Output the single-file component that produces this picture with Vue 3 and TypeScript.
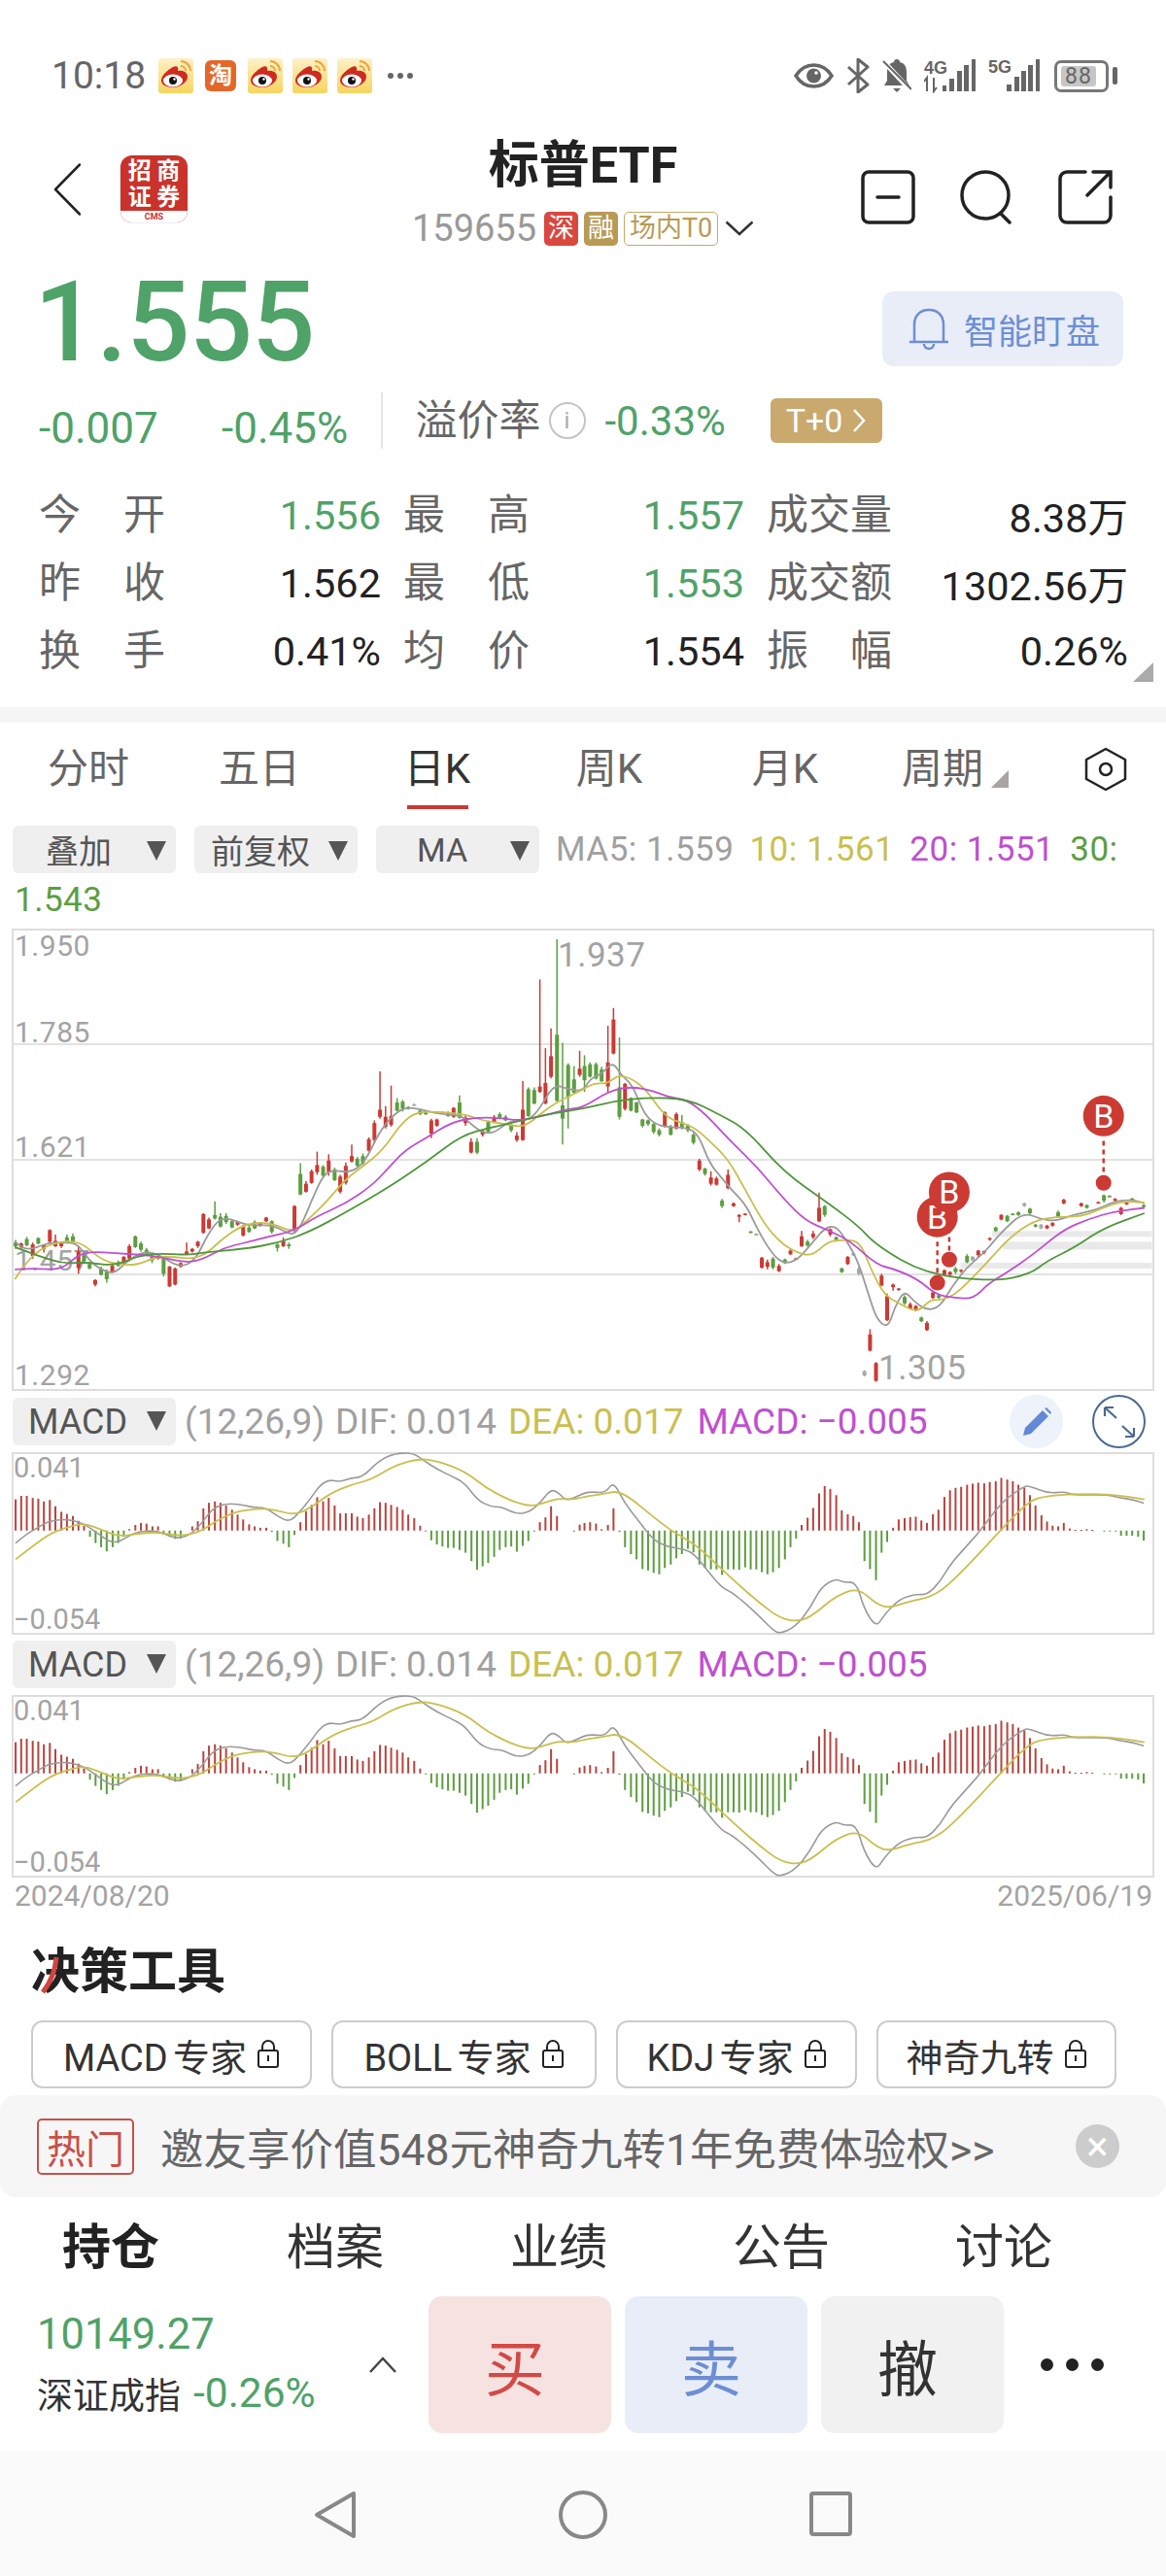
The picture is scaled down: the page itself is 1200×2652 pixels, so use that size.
<script setup lang="ts">
type Candle = [number, number, number, number, number, number];
type Pt = [number, number];

const zx = (x: number) => x / 2.6133;
const zy = (y: number) => 720 + y / 2.1778;
const my = (y: number) => 1400 + y / 2.8;

const shift = <T extends number[]>(rows: T[]): T[] => rows.map((r) => [r[0] + 1568, ...r.slice(1)] as unknown as T);

// x, kind (0 red, 1 green, 2 grey), wick top, body top, body bottom, wick bottom
const leftCandles: Candle[] = [
  [42,1,1212,1218,1226,1232],[57,0,1218,1220,1228,1232],[72,1,1205,1210,1224,1226],[88,0,1218,1222,1248,1254],[103,1,1206,1208,1220,1222],
  [118,0,1222,1224,1232,1240],[134,0,1188,1190,1216,1222],[149,0,1200,1214,1226,1228],[165,0,1216,1218,1226,1230],[180,1,1200,1206,1218,1220],
  [196,1,1198,1204,1216,1218],[211,0,1225,1238,1275,1288],[226,1,1240,1246,1260,1262],[241,1,1262,1266,1276,1278],[256,0,1300,1302,1312,1316],
  [272,1,1272,1276,1290,1292],[287,1,1278,1282,1300,1308],[302,0,1266,1270,1284,1286],[318,1,1258,1262,1270,1272],[333,0,1248,1250,1262,1266],
  [348,0,1222,1226,1254,1260],[364,1,1202,1204,1228,1230],[379,1,1216,1220,1234,1238],[394,1,1230,1234,1244,1246],[409,1,1246,1250,1258,1264],
  [425,0,1246,1248,1254,1256],[440,1,1250,1254,1288,1294],[456,0,1270,1272,1316,1318],[471,0,1274,1276,1312,1314],[486,0,1262,1264,1272,1274],
  [502,0,1218,1238,1244,1246],[517,0,1230,1232,1238,1240],[532,0,1214,1216,1226,1230],[547,0,1152,1154,1196,1198],[562,0,1162,1166,1186,1188],
  [578,1,1126,1156,1164,1166],[593,1,1152,1160,1182,1184],[608,1,1152,1158,1172,1176],[624,1,1166,1170,1184,1186],[639,0,1170,1172,1178,1180],
  [654,0,1178,1182,1202,1204],[670,1,1176,1184,1194,1196],[685,1,1168,1172,1186,1188],[700,0,1172,1174,1180,1182],[716,0,1160,1162,1170,1172],
  [731,1,1168,1170,1194,1198],[746,1,1220,1222,1230,1238],[762,0,1206,1214,1226,1228],[777,1,1218,1222,1226,1232],[792,0,1134,1136,1190,1198],
  [808,1,1040,1064,1110,1112],[823,0,1080,1086,1104,1106],[838,0,1054,1058,1084,1086],[853,0,1014,1044,1060,1066],[869,1,1044,1048,1068,1070],
  [884,0,1020,1034,1060,1068],[900,1,1050,1054,1078,1080],[915,0,1066,1070,1104,1108],[930,0,1038,1046,1084,1088],[946,0,998,1024,1036,1038],
  [961,1,1026,1030,1046,1048],[976,1,1018,1024,1040,1044],[992,0,982,986,1012,1014],[1007,0,944,950,988,996],[1022,0,834,920,936,940],
  [1037,0,912,936,958,962],[1052,0,866,934,954,958],[1068,1,894,904,922,924],[1083,1,898,902,918,924],[1098,1,912,914,918,920],
  [1114,2,906,908,910,912],[1130,1,920,922,930,932],[1145,1,926,926,930,932],[1160,0,940,944,974,984],[1175,0,940,942,956,958],
  [1190,2,924,925,928,930],[1205,1,924,926,934,936],[1220,0,914,916,936,938],[1236,1,888,904,938,940],[1252,0,932,938,950,956],
  [1267,0,984,992,1016,1018],[1283,1,984,992,1016,1020],[1298,0,966,968,976,980],[1313,1,944,948,970,972],[1329,0,932,936,948,950],
  [1344,1,926,930,938,940],[1360,1,932,936,944,946],[1375,1,952,956,966,970],[1390,0,970,978,988,992],[1406,0,856,920,988,990],
  [1421,1,870,874,934,936],[1437,1,870,876,906,908],[1452,0,628,868,880,882],[1467,0,782,860,906,908],[1482,0,738,800,846,850],
  [1498,1,538,752,900,902],[1513,1,770,910,940,998],[1528,1,816,820,892,962],[1544,1,822,852,882,884],[1559,0,788,828,842,846],
];
const rightCandles: Candle[] = [
  [4,1,798,822,854,880],[19,1,814,818,846,848],[35,1,814,818,850,852],[50,1,824,830,856,858],[67,0,732,814,868,882],[82,0,692,718,794,796],
  [98,1,758,870,936,942],[113,0,860,862,918,922],[129,1,892,894,922,924],[144,1,902,904,926,928],[160,1,940,942,956,960],[175,1,942,944,952,956],
  [190,1,950,952,970,974],[205,1,962,966,976,980],[220,0,924,926,958,960],[236,1,954,960,976,978],[251,0,926,930,962,964],[266,1,932,948,960,964],
  [282,1,952,956,966,970],[297,1,972,976,994,998],[313,0,1030,1034,1054,1058],[328,1,1050,1052,1064,1068],[344,0,1058,1072,1086,1090],[359,0,1070,1074,1088,1090],
  [374,1,1120,1124,1136,1140],[390,0,1054,1066,1096,1098],[405,0,1128,1130,1136,1138],[420,0,1154,1156,1160,1172],[436,0,1152,1153,1156,1157],[451,1,1192,1193,1196,1197],
  [466,2,1197,1198,1202,1203],[481,0,1250,1252,1274,1276],[496,0,1256,1262,1272,1278],[511,1,1250,1254,1274,1278],[527,0,1266,1270,1282,1284],[543,1,1254,1256,1264,1266],
  [558,0,1232,1236,1244,1246],[573,0,1252,1253,1255,1256],[588,0,1192,1204,1226,1228],[604,1,1212,1216,1224,1228],[619,0,1192,1198,1206,1210],[635,0,1106,1140,1170,1172],
  [650,1,1134,1136,1156,1160],[665,0,1186,1188,1200,1204],[681,1,1204,1206,1212,1216],[696,1,1274,1276,1284,1286],[712,0,1248,1250,1266,1268],[727,2,1240,1242,1246,1248],
  [742,2,1272,1276,1288,1292],[757,2,1504,1506,1516,1518],[772,0,1412,1424,1460,1462],[788,0,1486,1488,1528,1530],[803,0,1288,1292,1314,1316],[818,0,1332,1338,1392,1394],
  [834,0,1310,1312,1318,1326],[849,0,1320,1321,1324,1326],[865,1,1336,1340,1354,1358],[880,0,1352,1356,1366,1368],[895,0,1358,1360,1370,1372],[910,1,1384,1386,1394,1396],
  [925,0,1394,1398,1414,1416],[941,0,1326,1330,1342,1344],[957,1,1334,1336,1342,1344],[972,0,1278,1280,1290,1292],[987,0,1282,1284,1290,1296],[1002,1,1272,1276,1284,1288],
  [1017,0,1278,1279,1282,1286],[1033,1,1244,1248,1262,1264],[1048,2,1248,1250,1258,1260],[1063,0,1234,1236,1246,1250],[1079,0,1236,1237,1240,1244],[1094,0,1206,1208,1210,1214],
  [1110,1,1182,1184,1192,1194],[1125,0,1154,1156,1166,1168],[1141,1,1156,1158,1170,1172],[1156,1,1152,1153,1156,1157],[1171,1,1148,1150,1156,1158],[1187,2,1128,1130,1136,1138],
  [1202,1,1140,1142,1152,1156],[1217,1,1176,1178,1182,1184],[1232,2,1176,1178,1186,1188],[1248,0,1178,1180,1186,1188],[1263,0,1172,1174,1180,1182],[1278,1,1146,1150,1160,1162],
  [1293,0,1120,1122,1130,1132],[1340,0,1128,1130,1136,1138],[1355,1,1132,1134,1140,1142],[1386,0,1126,1127,1130,1131],[1401,1,1110,1112,1124,1128],[1416,1,1112,1113,1115,1116],
  [1431,0,1118,1120,1124,1126],[1447,0,1138,1140,1154,1156],[1462,0,1126,1128,1132,1134],[1477,1,1118,1119,1122,1123],[1508,1,1132,1134,1138,1140],
];
const candleColors = ['#cb3a33', '#5c9e3f', '#a9a9a9'];
const candles = [...leftCandles, ...shift(rightCandles)].map(([x, k, a, b, c, d]) => ({
  x: zx(x),
  color: candleColors[k],
  top: zy(a),
  bottom: zy(d),
  bodyTop: zy(b),
  bodyH: Math.max(1.5, zy(c) - zy(b)),
}));

function smooth(points: Pt[]): string {
  let d = `M${points[0][0].toFixed(1)} ${points[0][1].toFixed(1)}`;
  for (let i = 1; i < points.length - 1; i++) {
    const mx = (points[i][0] + points[i + 1][0]) / 2;
    const mid = (points[i][1] + points[i + 1][1]) / 2;
    d += `Q${points[i][0].toFixed(1)} ${points[i][1].toFixed(1)} ${mx.toFixed(1)} ${mid.toFixed(1)}`;
  }
  const last = points[points.length - 1];
  return `${d}L${last[0].toFixed(1)} ${last[1].toFixed(1)}`;
}
const line = (l: Pt[], r: Pt[], fy: (y: number) => number) =>
  smooth([...l, ...shift(r)].map(([x, y]) => [zx(x), fy(y)] as Pt));

const maLines = [
  { color: '#9a9a9a', d: line(
    [[40,1215],[60,1232],[90,1232],[130,1218],[170,1218],[195,1218],[215,1228],[240,1258],[270,1278],[305,1288],[330,1270],[360,1248],[395,1238],[430,1246],[470,1268],[500,1270],[530,1250],[560,1198],[590,1165],[620,1165],[650,1175],[680,1180],[730,1178],[770,1195],[790,1200],[810,1180],[840,1120],[870,1065],[900,1055],[940,1062],[980,1040],[1020,970],[1060,930],[1090,915],[1130,918],[1180,930],[1240,932],[1270,955],[1300,972],[1330,972],[1370,945],[1420,945],[1450,920],[1490,862],[1530,875]],
    [[0,878],[20,850],[50,840],[80,812],[100,840],[130,862],[150,900],[170,935],[200,955],[240,960],[280,960],[310,975],[340,1040],[375,1075],[400,1100],[440,1135],[470,1190],[510,1245],[540,1265],[575,1258],[610,1225],[650,1185],[680,1180],[710,1215],[740,1260],[770,1340],[790,1390],[820,1410],[840,1360],[865,1325],[890,1350],[925,1370],[960,1362],[990,1320],[1030,1275],[1080,1240],[1130,1190],[1185,1150],[1230,1165],[1270,1170],[1320,1155],[1380,1145],[1430,1125],[1480,1122],[1510,1130]], zy) },
  { color: '#c9bf4e', d: line(
    [[40,1300],[70,1262],[110,1232],[150,1218],[195,1214],[230,1225],[270,1255],[320,1268],[370,1268],[420,1250],[470,1250],[520,1255],[560,1240],[600,1208],[650,1180],[700,1172],[740,1178],[790,1195],[830,1165],[880,1125],[930,1075],[980,1045],[1030,1010],[1080,950],[1120,925],[1180,925],[1250,930],[1300,945],[1360,952],[1410,960],[1460,925],[1500,902]],
    [[0,875],[30,860],[65,862],[95,842],[130,850],[170,875],[220,935],[260,948],[300,960],[340,990],[390,1030],[440,1105],[490,1180],[540,1225],[590,1245],[620,1245],[660,1215],[700,1212],[745,1215],[775,1280],[810,1335],[850,1355],[900,1375],[935,1345],[960,1348],[1000,1335],[1050,1295],[1100,1250],[1150,1205],[1210,1170],[1270,1160],[1340,1160],[1400,1140],[1450,1125],[1510,1128]], zy) },
  { color: '#bf4fd0', d: line(
    [[40,1278],[90,1275],[165,1280],[210,1245],[250,1238],[310,1242],[380,1245],[430,1250],[490,1262],[540,1258],[600,1230],[660,1218],[720,1205],[790,1192],[850,1160],[930,1130],[1000,1090],[1040,1055],[1090,1010],[1150,982],[1210,950],[1270,938],[1340,938],[1400,945],[1470,932],[1530,918]],
    [[0,915],[70,878],[130,868],[190,878],[230,892],[280,898],[330,930],[390,985],[470,1050],[540,1120],[600,1170],[660,1190],[720,1215],[790,1268],[840,1278],[900,1300],[950,1335],[1000,1342],[1050,1344],[1090,1310],[1140,1285],[1210,1245],[1290,1190],[1360,1165],[1430,1148],[1510,1140]], zy) },
  { color: '#4f963a', d: line(
    [[40,1228],[110,1250],[170,1265],[230,1262],[310,1270],[370,1248],[430,1242],[500,1246],[570,1238],[660,1232],[750,1218],[830,1195],[930,1150],[1050,1092],[1150,1035],[1240,978],[1320,960],[1400,945],[1470,930]],
    [[0,918],[90,900],[170,893],[280,895],[370,932],[440,965],[540,1060],[660,1130],[740,1180],[790,1225],[920,1288],[1100,1305],[1200,1290],[1250,1258],[1320,1230],[1400,1185],[1510,1152]], zy) },
];

const bands = [
  { x: zx(1568 + 1100), y: zy(1192), w: zx(430), h: 6 },
  { x: zx(1568 + 1130), y: zy(1216), w: zx(400), h: 8 },
  { x: zx(1568 + 1015), y: zy(1263), w: zx(515), h: 6 },
];

const grid = [1075, 1194, 1312];
const yLabels = [
  { t: '1.950', x: 15, y: 984 }, { t: '1.785', x: 15, y: 1073 }, { t: '1.621', x: 15, y: 1191 },
  { t: '1.457', x: 15, y: 1308 }, { t: '1.292', x: 15, y: 1426 },
];
const peakLabels = [{ t: '1.937', x: 574, y: 995 }, { t: '1.305', x: 904, y: 1420 }];
const markers = [
  { x: zx(1568 + 953), dot: zy(1308), head: zy(1160), low: zy(1216) },
  { x: zx(1568 + 985), dot: zy(1256), head: zy(1105), low: zy(1166) },
  { x: zx(1568 + 1400), dot: zy(1084), head: zy(934), low: zy(990) },
];

const macdLeft: Pt[] = [
  [42,402],[57,392],[72,392],[88,398],[103,400],[118,408],[134,404],[149,422],[165,438],[180,444],[196,450],[211,464],[226,478],
  [242,510],[257,528],[272,540],[287,552],[303,540],[318,528],[333,510],[348,488],[364,476],[379,470],[394,472],[410,480],[425,480],
  [440,504],[456,510],[471,516],[486,514],[517,480],[532,465],[547,428],[562,412],[578,408],[593,412],[608,420],[624,432],[639,446],[654,460],
  [670,474],[685,480],[700,484],[716,484],[731,496],[746,522],[762,530],[777,540],[792,505],[808,468],[823,436],[838,418],[853,396],[869,408],[884,398],
  [900,420],[915,442],[930,442],[946,442],[961,452],[976,456],[992,446],[1007,428],[1022,410],[1037,412],[1052,418],[1068,424],[1083,432],[1098,446],[1114,456],[1130,478],
  [1145,495],[1160,520],[1175,532],[1190,538],[1205,542],[1220,542],[1236,548],[1252,556],[1268,580],[1283,605],[1298,595],[1313,585],[1329,568],[1344,548],[1360,540],[1375,538],[1390,553],[1406,536],[1421,522],
  [1437,495],[1452,468],[1467,454],[1482,422],[1498,450],[1544,495],[1559,475],
];
const macdRight: Pt[] = [
  [4,470],[19,468],[35,472],[50,488],[67,476],[82,428],[98,496],[113,540],[129,560],[144,575],[160,603],[175,607],[190,614],[205,618],[220,600],[236,590],[251,572],[266,560],[282,545],[297,555],
  [313,590],[328,600],[344,604],[359,604],[374,620],[390,604],[405,604],[420,605],[436,598],[451,604],[466,604],[481,612],[496,618],[511,612],[527,600],[543,575],[558,540],[573,515],
  [588,476],[604,455],[619,427],[635,385],[650,364],[665,372],[681,390],[696,434],[712,445],[727,450],[742,468],[757,580],[772,603],[788,635],[803,556],[818,525],
  [834,484],[849,460],[865,456],[880,453],[895,452],[910,463],[925,470],[941,445],[956,432],[972,395],[987,376],[1002,369],[1017,366],[1033,360],[1048,357],[1063,354],[1079,356],[1094,352],[1110,350],[1125,340],[1141,345],[1156,350],[1171,360],[1187,368],[1202,390],[1217,420],[1233,448],[1248,466],[1263,478],[1278,480],[1293,470],[1309,486],[1324,490],[1340,490],[1355,488],[1370,490],
  [1402,494],[1417,494],[1433,494],[1447,507],[1462,507],[1477,507],[1493,510],[1508,521],
];
const macdBars = [...macdLeft, ...shift(macdRight)].map(([x, y]) => ({
  x: zx(x),
  y: Math.min(my(y), my(492)),
  h: Math.abs(my(y) - my(492)),
  color: y < 492 ? '#b9433e' : '#5c9e3f',
}));
const difLine = line(
  [[42,528],[70,503],[100,485],[130,465],[165,460],[195,462],[230,475],[260,498],[295,525],[320,525],[350,505],[375,495],[410,492],[440,500],[475,516],[510,505],[540,475],[570,430],[600,415],[640,415],[680,425],[715,426],[745,450],[778,468],[805,440],[835,400],[860,362],[885,345],[915,352],[945,340],[975,338],[1020,290],[1060,270],[1110,268],[1140,290],[1175,315],[1215,335],[1250,355],[1285,405],[1320,423],[1350,424],[1390,445],[1425,438],[1455,410],[1482,372],[1505,385],[1520,405],[1545,398]],
  [[0,385],[20,380],[60,384],[82,350],[110,410],[150,465],[190,520],[230,540],[270,545],[300,560],[340,615],[375,658],[400,670],[440,705],[480,745],[510,778],[530,790],[570,770],[610,718],[640,655],[680,630],[700,642],[735,640],[755,715],[788,772],[810,735],[850,690],[895,675],[925,678],[960,640],[990,585],[1060,505],[1125,410],[1185,365],[1200,363],[1250,385],[1295,380],[1320,390],[1410,388],[1440,397],[1480,403],[1508,413]], my);
const deaLine = line(
  [[42,575],[90,535],[140,497],[195,478],[230,472],[275,490],[320,510],[370,500],[430,497],[480,508],[535,498],[580,465],[630,438],[700,428],[740,432],[790,447],[830,430],[890,383],[950,358],[1000,345],[1060,305],[1125,285],[1170,290],[1250,320],[1320,380],[1420,425],[1470,410],[1500,400],[1545,402]],
  [[0,395],[60,385],[92,378],[130,400],[180,445],[240,495],[300,530],[350,580],[420,650],[480,705],[530,745],[580,755],[620,735],[680,680],[740,657],[790,705],[825,715],[870,698],[950,680],[1020,610],[1120,495],[1200,405],[1250,392],[1320,387],[1420,387],[1510,402]], my);

const notifications = ['weibo', 'taobao', 'weibo', 'weibo', 'weibo'];
const stats = [
  { l1: ['今', '开'], v1: '1.556', c1: 'up', l2: ['最', '高'], v2: '1.557', c2: 'up', l3: ['成', '交', '量'], v3: '8.38万' },
  { l1: ['昨', '收'], v1: '1.562', c1: '', l2: ['最', '低'], v2: '1.553', c2: 'up', l3: ['成', '交', '额'], v3: '1302.56万' },
  { l1: ['换', '手'], v1: '0.41%', c1: '', l2: ['均', '价'], v2: '1.554', c2: '', l3: ['振', '幅'], v3: '0.26%' },
];
const tabs = ['分时', '五日', '日K', '周K', '月K', '周期'];
const selects = ['叠加', '前复权', 'MA'];
const pills = [
  { t: 'MACD 专家', w: 'p1' }, { t: 'BOLL 专家', w: 'p2' }, { t: 'KDJ 专家', w: 'p3' }, { t: '神奇九转', w: 'p4' },
];
const bottomTabs = ['持仓', '档案', '业绩', '公告', '讨论'];
const panels = [0, 1];
</script>

<template>
  <div class="phone">
    <header class="status">
      <span class="time">10:18</span>
      <template v-for="(n, i) in notifications" :key="i">
        <svg v-if="n === 'weibo'" class="note" viewBox="0 0 36 36">
          <defs>
            <linearGradient id="wb" x1="0" y1="0" x2="0" y2="1">
              <stop offset="0" stop-color="#fdf1c8" />
              <stop offset="1" stop-color="#f6d45e" />
            </linearGradient>
          </defs>
          <rect width="36" height="36" rx="3" fill="url(#wb)" />
          <path d="M3 23C3 17 10 12 15 9c4-2 6 0 5 4 5-1 10 1 10 6 0 6-8 11-15 11C8 30 3 27 3 23Z" fill="#cf2a20" />
          <ellipse cx="15" cy="23" rx="10" ry="6.5" fill="#fff" />
          <circle cx="15" cy="23" r="4" fill="#111" />
          <circle cx="16.5" cy="21.5" r="1.2" fill="#fff" />
          <path d="M23 3a10 10 0 0 1 10 10M23 8a5 5 0 0 1 5 5" fill="none" stroke="#eda53a" stroke-width="2" />
        </svg>
        <span v-else class="tao">淘</span>
      </template>
      <span class="more-dots"><i></i><i></i><i></i></span>

      <div class="status-right">
        <svg class="eye" viewBox="0 0 41 26"><path d="M2 13C7 5 13 2 20.500 2S34 5 39 13c-5 8-11 11-18.500 11S7 21 2 13Z" fill="none" stroke="#666" stroke-width="3.500" /><circle cx="20.500" cy="13" r="7.500" fill="#666" /><circle cx="23" cy="10" r="1.800" fill="#fff" /></svg>
        <svg class="bt" viewBox="0 0 24 36"><path d="M2 9l20 18-10 8V1l10 8L2 27" fill="none" stroke="#666" stroke-width="3" stroke-linejoin="round" /></svg>
        <svg class="bell" viewBox="0 0 30 36"><path d="M15 1c2 0 3 1 3 3 5 1 7 5 7 10v9l3 5H2l3-5v-9c0-5 2-9 7-10 0-2 1-3 3-3Z" fill="#666" /><path d="M11 31h8l-4 4Z" fill="#666" /><path d="M1 3l28 30" stroke="#fff" stroke-width="5" /><path d="M1 3l29 29" stroke="#666" stroke-width="2" /></svg>
        <svg class="sig4" viewBox="0 0 54 36">
          <text x="0" y="16" class="net">4G</text>
          <path d="M3 34V20l-3 4M10 20v14l3-4" fill="none" stroke="#666" stroke-width="2" />
          <rect x="19" y="28" width="4" height="6" fill="#666" /><rect x="26" y="21" width="5" height="13" fill="#666" /><rect x="34" y="13" width="5" height="21" fill="#666" /><rect x="41" y="7" width="5" height="27" fill="#666" /><rect x="49" y="1" width="4" height="33" fill="#666" />
        </svg>
        <svg class="sig5" viewBox="0 0 54 36">
          <text x="0" y="15" class="net">5G</text>
          <rect x="19" y="27" width="5" height="7" fill="#666" /><rect x="27" y="19" width="5" height="15" fill="#666" /><rect x="34" y="13" width="5" height="21" fill="#666" /><rect x="41" y="7" width="5" height="27" fill="#666" /><rect x="49" y="1" width="4" height="33" fill="#666" />
        </svg>
        <div class="battery"><span class="cell">88</span></div><i class="nub"></i>
      </div>
    </header>

    <nav class="topnav">
      <div class="nav-left">
        <svg class="back" viewBox="0 0 28 54"><path d="M27 1.500 2 27l25 25.500" fill="none" stroke="#222" stroke-width="2.500" stroke-linecap="round" stroke-linejoin="round" /></svg>
        <div class="logo">
          <div class="logo-main"><span>招</span><span>商</span><span>证</span><span>券</span></div>
          <div class="logo-foot">CMS</div>
        </div>
      </div>
      <div class="nav-mid">
        <div class="title">标普ETF</div>
        <div class="sub">
          <span class="code">159655</span>
          <span class="tag red">深</span>
          <span class="tag gold">融</span>
          <span class="tag line">场内T0</span>
          <svg class="sub-chev" viewBox="0 0 30 16"><path d="M1.500 1.500 15 14 28.500 1.500" fill="none" stroke="#333" stroke-width="2.500" /></svg>
        </div>
      </div>
      <div class="nav-right">
        <svg class="act" viewBox="0 0 56 56"><rect x="2" y="2" width="52" height="52" rx="6" fill="none" stroke="#222" stroke-width="3.500" /><path d="M17 28h22" stroke="#222" stroke-width="3.500" stroke-linecap="round" /></svg>
        <svg class="act act-s" viewBox="0 0 54 56"><circle cx="26" cy="26" r="24" fill="none" stroke="#222" stroke-width="3.500" /><path d="M42 45l9 9" stroke="#222" stroke-width="3.500" stroke-linecap="round" /></svg>
        <svg class="act act-o" viewBox="0 0 56 56"><path d="M28 2H9a7 7 0 0 0-7 7v38a7 7 0 0 0 7 7h38a7 7 0 0 0 7-7V28" fill="none" stroke="#222" stroke-width="3.500" stroke-linecap="round" /><path d="M30 26 54 2M36 2h18v16" fill="none" stroke="#222" stroke-width="3.500" stroke-linecap="round" /></svg>
      </div>
    </nav>

    <section class="quote">
      <div class="price-row">
        <div class="price">1.555</div>
        <button class="smart">
          <svg class="smart-bell" viewBox="0 0 42 44"><path d="M6 34V17C6 8 12 2 21 2s15 6 15 15v17M1 35h40M16 37a5 5 0 0 0 10 0" fill="none" stroke="#6d8ed4" stroke-width="2.500" /></svg>
          <span>智能盯盘</span>
        </button>
      </div>
      <div class="chg-row">
        <span class="chg c1">-0.007</span>
        <span class="chg c2">-0.45%</span>
        <i class="divider"></i>
        <span class="prem">溢价率</span>
        <span class="info">i</span>
        <span class="prem-val">-0.33%</span>
        <span class="t0">T+0<svg viewBox="0 0 14 26"><path d="M2 2l10 11L2 24" fill="none" stroke="#fff" stroke-width="2.500" /></svg></span>
      </div>
      <div class="stats">
        <template v-for="(r, i) in stats" :key="i">
          <span class="lab"><b v-for="c in r.l1" :key="c">{{ c }}</b></span>
          <span class="val v1" :class="r.c1">{{ r.v1 }}</span>
          <span class="lab l2"><b v-for="c in r.l2" :key="c">{{ c }}</b></span>
          <span class="val v2" :class="r.c2">{{ r.v2 }}</span>
          <span class="lab l3"><b v-for="c in r.l3" :key="c">{{ c }}</b></span>
          <span class="val v3">{{ r.v3 }}</span>
        </template>
      </div>
      <i class="corner"></i>
    </section>

    <div class="gap-band"></div>

    <div class="kline-tabs">
      <span v-for="(t, i) in tabs" :key="t" class="ktab" :class="[`k${i}`, { on: t === '日K' }]">
        {{ t }}<i v-if="t === '周期'" class="tri"></i><i v-if="t === '日K'" class="under"></i>
      </span>
      <svg class="hex" viewBox="0 0 44 46"><path d="M22 2l20 11v20L22 44 2 33V13Z" fill="none" stroke="#222" stroke-width="2.500" stroke-linejoin="round" /><circle cx="22" cy="23" r="6" fill="none" stroke="#222" stroke-width="2.500" /></svg>
    </div>

    <div class="filters">
      <div v-for="s in selects" :key="s" class="select">
        <span class="sel-text">{{ s }}</span><i class="down"></i>
      </div>
      <div class="legend">
        <span class="lg-grey">MA5: 1.559</span>
        <span class="lg-yellow">10: 1.561</span>
        <span class="lg-purple">20: 1.551</span>
        <span class="lg-green">30:</span>
      </div>
    </div>
    <div class="legend-wrap">1.543</div>

    <svg class="main-chart" viewBox="0 956 1200 477">
      <rect x="13" y="957" width="1174" height="474" fill="#fff" stroke="#ddd" stroke-width="2" />
      <line v-for="g in grid" :key="g" x1="13" x2="1187" :y1="g" :y2="g" stroke="#d8d8d8" stroke-width="1.500" />
      <rect v-for="(b, i) in bands" :key="i" :x="b.x" :y="b.y" :width="b.w" :height="b.h" fill="#e9e9e9" />
      <text v-for="l in yLabels" :key="l.t" :x="l.x" :y="l.y" class="ylab">{{ l.t }}</text>
      <text v-for="l in peakLabels" :key="l.t" :x="l.x" :y="l.y" class="peak">{{ l.t }}</text>
      <g v-for="(c, i) in candles" :key="i">
        <line :x1="c.x" :x2="c.x" :y1="c.top" :y2="c.bottom" :stroke="c.color" stroke-width="1.500" />
        <rect :x="c.x - 2" :y="c.bodyTop" width="4" :height="c.bodyH" :fill="c.color" />
      </g>
      <path v-for="m in maLines" :key="m.color" :d="m.d" fill="none" :stroke="m.color" stroke-width="1.800" stroke-linejoin="round" />
      <g v-for="(m, i) in markers" :key="i">
        <line :x1="m.x" :x2="m.x" :y1="m.low" :y2="m.dot" stroke="#cb3a33" stroke-width="2.500" stroke-dasharray="5 4" />
        <ellipse :cx="m.x" :cy="m.dot" rx="8" ry="8" fill="#cb3a33" />
        <circle :cx="m.x" :cy="m.head" r="21" fill="#cb3a33" />
        <text :x="m.x" :y="m.head + 12" class="buy">B</text>
      </g>
    </svg>

    <div v-for="p in panels" :key="p" class="panel">
      <div class="macd-head">
        <div class="select macd-select"><span class="macd-name">MACD</span><i class="down"></i></div>
        <span class="m-grey m-params">(12,26,9)</span>
        <span class="m-grey m-dif">DIF: 0.014</span>
        <span class="m-yellow">DEA: 0.017</span>
        <span class="m-purple">MACD: −0.005</span>
        <template v-if="p === 0">
          <span class="pen">
            <svg viewBox="0 0 32 32"><path d="M2 30l2-8L22 4l6 6-18 18ZM24 2l2-1 5 5-1 2Z" fill="#6189d6" /></svg>
          </span>
          <span class="expand">
            <svg viewBox="0 0 36 36"><path d="M3 3l12 11M3 3v9M3 3h9M33 33 21 22M33 33v-9M33 33h-9" fill="none" stroke="#4a6b8f" stroke-width="2.200" /></svg>
          </span>
        </template>
      </div>
      <svg class="macd-chart" viewBox="0 1495 1200 188">
        <rect x="13" y="1496" width="1174" height="186" fill="#fff" stroke="#ddd" stroke-width="2" />
        <rect v-for="(b, i) in macdBars" :key="i" :x="b.x - 1" :y="b.y" width="2" :height="Math.max(b.h, 1)" :fill="b.color" />
        <path :d="difLine" fill="none" stroke="#9a9a9a" stroke-width="1.600" />
        <path :d="deaLine" fill="none" stroke="#c9bf4e" stroke-width="1.800" />
        <text x="14" y="1521" class="mlab">0.041</text>
        <text x="14" y="1677" class="mlab">−0.054</text>
      </svg>
    </div>

    <div class="dates"><span>2024/08/20</span><span>2025/06/19</span></div>

    <h2 class="tools">决策工具<svg class="tools-mark" viewBox="0 0 20 38"><path d="M16 1C15 14 10 27 2 37" fill="none" stroke="#d1453f" stroke-width="5" /></svg></h2>
    <div class="pills">
      <div v-for="x in pills" :key="x.t" class="pill" :class="x.w">
        <span>{{ x.t }}</span>
        <svg viewBox="0 0 24 30"><path d="M6 11V7a6 6 0 0 1 12 0v4" fill="none" stroke="#222" stroke-width="2" /><rect x="2" y="11" width="20" height="17" rx="2" fill="none" stroke="#222" stroke-width="2" /><path d="M12 16v6" stroke="#222" stroke-width="2" /></svg>
      </div>
    </div>

    <div class="banner">
      <span class="hot">热门</span>
      <span class="banner-text">邀友享价值548元神奇九转1年免费体验权&gt;&gt;</span>
      <span class="close">×</span>
    </div>

    <div class="btabs"><span v-for="(t, i) in bottomTabs" :key="t" class="btab" :class="{ active: i === 0 }">{{ t }}</span></div>

    <div class="trade">
      <div class="index">
        <div class="idx-val">10149.27</div>
        <div class="idx-line"><span class="idx-name">深证成指</span><span class="idx-pct">-0.26%</span></div>
      </div>
      <svg class="up-chev" viewBox="0 0 30 18"><path d="M2 16 15 2l13 14" fill="none" stroke="#444" stroke-width="2.500" /></svg>
      <div class="act-btn buy-btn">买</div>
      <div class="act-btn sell-btn">卖</div>
      <div class="act-btn undo-btn">撤</div>
      <div class="trade-more"><i></i><i></i><i></i></div>
    </div>

    <footer class="sysnav">
      <svg class="sys-back" viewBox="0 0 44 50"><path d="M41 3v44L3 25Z" fill="none" stroke="#888" stroke-width="4" stroke-linejoin="round" /></svg>
      <svg class="sys-home" viewBox="0 0 50 50"><circle cx="25" cy="25" r="23" fill="none" stroke="#888" stroke-width="4" /></svg>
      <svg class="sys-rect" viewBox="0 0 44 46"><rect x="2" y="2" width="40" height="42" rx="2" fill="none" stroke="#888" stroke-width="4" /></svg>
    </footer>
  </div>
</template>

<style scoped>
.phone { position: relative; width: 1200px; height: 2652px; overflow: hidden; background: #fff; font-family: Roboto, "Noto Sans CJK SC", sans-serif; color: #222; }
.phone i { display: block; font-style: normal; }
.status { display: flex; align-items: center; height: 36px; padding: 60px 50px 0 53px; }
.time { width: 110px; font-size: 39px; line-height: 36px; color: #666; }
.note { width: 36px; height: 36px; margin-right: 10px; flex: none; }
.tao { display: flex; align-items: center; justify-content: center; width: 32px; height: 32px; margin: 0 12px 0 2px; border-radius: 6px; background: #e4672a; color: #fff; font-size: 24px; line-height: 32px; flex: none; font-weight: 700; }
.more-dots { display: flex; gap: 4px; margin-left: 6px; }
.more-dots i { width: 6px; height: 6px; border-radius: 50%; background: #666; }
.status-right { display: flex; align-items: center; margin-left: auto; }
.eye { width: 41px; height: 26px; margin-right: 13px; }
.bt { width: 24px; height: 36px; margin-right: 13px; }
.bell { width: 30px; height: 36px; margin-right: 13px; }
.sig4, .sig5 { width: 54px; height: 36px; margin-right: 12px; }
.sig5 { margin-right: 14px; }
.net { font: 700 18px "Liberation Sans", sans-serif; fill: #666; }
.battery { display: flex; align-items: center; width: 56px; height: 33px; box-sizing: border-box; border: 3px solid #777; border-radius: 7px; padding: 3px; }
.cell { display: block; width: 36px; height: 21px; margin-left: 1px; background: #c6c6c6; border-radius: 3px; color: #666; font-size: 23px; line-height: 22px; text-align: center; letter-spacing: 1px; }
.phone .nub { width: 5px; height: 18px; margin-left: 4px; background: #666; border-radius: 2px; }

.topnav { display: grid; grid-template-columns: 1fr auto 1fr; height: 157px; padding: 50px 55px 0; box-sizing: border-box; }
.nav-left { display: flex; align-items: center; height: 69px; padding-top: 14px; gap: 41px; }
.back { width: 28px; height: 54px; }
.logo { width: 69px; height: 69px; border-radius: 12px; overflow: hidden; background: #c9332b; flex: none; box-shadow: 0 0 0 1px #eee; }
.logo-main { display: grid; grid-template-columns: 1fr 1fr; height: 57px; padding: 3px 5px 0; box-sizing: border-box; color: #fff; font-size: 24px; line-height: 27px; font-weight: 700; text-align: center; }
.logo-foot { height: 12px; background: #fff; color: #c9332b; font-size: 9px; line-height: 13px; font-weight: 700; text-align: center; }
.nav-mid { display: flex; flex-direction: column; align-items: center; }
.title { font-size: 52px; line-height: 50px; font-weight: 700; color: #222; }
.sub { display: flex; align-items: center; height: 36px; margin-top: 21px; }
.code { font-size: 38px; line-height: 36px; color: #999; margin-right: 8px; }
.tag { display: flex; align-items: center; justify-content: center; height: 35px; width: 35px; border-radius: 5px; margin-right: 6px; font-size: 27px; line-height: 35px; color: #fff; box-sizing: border-box; }
.tag.red { background: #d9483f; }
.tag.gold { background: #b99a55; }
.tag.line { width: 97px; border: 1.500px solid #c5a869; color: #b89a55; background: #fff; font-size: 27px; white-space: nowrap; }
.sub-chev { width: 30px; height: 16px; margin-left: 1px; }
.nav-right { display: flex; justify-content: flex-end; padding-top: 29px; }
.act { width: 56px; height: 56px; }
.act-s { width: 54px; margin-left: 46px; }
.act-o { margin-left: 47px; }

.quote { position: relative; height: 475px; }
.price-row { display: flex; justify-content: space-between; padding: 47px 44px 0 35px; height: 77px; }
.price { font-size: 115px; line-height: 63px; font-weight: 500; color: #4fa268; letter-spacing: -1px; }
.smart { display: flex; align-items: center; width: 248px; height: 77px; border: 0; border-radius: 12px; padding: 0 0 0 27px; background: #e8edf8; font-family: inherit; color: #6d8ed4; font-size: 35px; }
.smart-bell { width: 42px; height: 44px; margin-right: 15px; }
.chg-row { display: flex; align-items: center; height: 58px; margin-top: 27px; padding-left: 40px; }
.chg { margin-top: 16px; font-size: 44px; line-height: 40px; color: #4fa268; white-space: nowrap; }
.c1 { width: 188px; }
.c2 { width: 164px; }
.phone .divider { width: 1.500px; height: 58px; background: #e5e5e5; }
.prem { margin-left: 34px; width: 137px; font-size: 43px; line-height: 50px; color: #666; }
.info { display: flex; align-items: center; justify-content: center; width: 38px; height: 38px; box-sizing: border-box; border: 2.500px solid #c4c4c4; border-radius: 50%; color: #aaa; font-size: 24px; }
.prem-val { margin-left: 20px; width: 170px; font-size: 42px; color: #4fa268; white-space: nowrap; }
.t0 { display: flex; align-items: center; justify-content: center; gap: 10px; width: 115px; height: 46px; border-radius: 6px; background: #c9a96e; color: #fff; font-size: 34px; }
.t0 svg { width: 14px; height: 26px; }
.stats { display: grid; grid-template-columns: 130px 222px 153px 221px 152px 243px; grid-auto-rows: 70px; margin-top: 33px; padding-left: 40px; align-items: center; }
.lab { display: flex; justify-content: space-between; font-size: 43px; line-height: 50px; color: #666; }
.lab b { font-weight: 400; }
.l2, .l3 { padding-left: 23px; }
.val { font-size: 41.500px; text-align: right; color: #222; white-space: nowrap; }
.val.up { color: #4fa268; }
.phone .corner { position: absolute; right: 13px; top: 429px; width: 0; height: 0; border-left: 21px solid transparent; border-bottom: 20px solid #aaa; }

.gap-band { height: 16px; background: #f5f5f5; }
.kline-tabs { display: flex; align-items: center; height: 96px; }
.ktab { position: relative; text-align: center; font-size: 42px; line-height: 96px; color: #666; flex: none; }
.k0 { width: 182px; } .k1 { width: 170px; } .k2 { width: 196px; color: #333; } .k3 { width: 158px; } .k4 { width: 204px; } .k5 { width: 120px; }
.phone .tri { position: absolute; top: 49px; right: -8px; width: 0; height: 0; border-left: 18px solid transparent; border-bottom: 18px solid #a8a4a4; }
.phone .under { position: absolute; left: 67px; top: 85px; width: 63px; height: 4px; background: #cb3a33; }
.hex { width: 44px; height: 46px; margin-left: 86px; }

.filters { display: flex; align-items: center; gap: 19px; padding: 10px 0 0 13px; }
.select { position: relative; width: 168px; height: 49px; border-radius: 6px; background: #efefef; display: flex; align-items: center; justify-content: center; flex: none; font-size: 34px; color: #555; }
.sel-text { margin-right: 32px; white-space: nowrap; }
.phone .down { position: absolute; right: 10px; top: 16px; width: 0; height: 0; border-left: 10px solid transparent; border-right: 10px solid transparent; border-top: 20px solid #555; }
.legend { display: flex; font-size: 35px; letter-spacing: 0.500px; white-space: nowrap; margin-left: -2px; }
.legend span { margin-right: 16px; }
.lg-grey { color: #a0a0a0; } .lg-yellow { color: #c9bf4e; } .lg-purple { color: #bf4fd0; } .lg-green { color: #5c9e3f; }
.legend-wrap { margin: 3px 0 0 15px; height: 54px; line-height: 50px; font-size: 35px; letter-spacing: 0.500px; color: #5c9e3f; }
.main-chart { display: block; width: 1200px; height: 477px; }
.ylab { font-size: 30px; fill: #a3a3a3; font-family: Roboto, sans-serif; letter-spacing: 0.500px; }
.peak { font-size: 35px; fill: #a3a3a3; font-family: Roboto, sans-serif; letter-spacing: 0.500px; }
.buy { font-size: 34px; fill: #fff; text-anchor: middle; font-family: Roboto, sans-serif; }

.panel { margin-top: 6px; }
.macd-head { display: flex; align-items: center; height: 49px; padding-left: 13px; font-size: 37px; white-space: nowrap; position: relative; }
.macd-select { justify-content: flex-start; padding-left: 16px; box-sizing: border-box; color: #555; font-size: 36px; }
.macd-select .down { top: 14px; }
.m-grey { color: #a0a0a0; }
.m-params { margin-left: 9px; margin-right: 11px; }
.m-dif { margin-right: 12px; }
.m-yellow { color: #c9bf4e; margin-right: 14px; }
.m-purple { color: #bf4fd0; }
.pen { position: absolute; left: 1039px; top: -3px; width: 55px; height: 55px; border-radius: 50%; background: #eef2fa; display: flex; align-items: center; justify-content: center; }
.pen svg { width: 32px; height: 32px; }
.expand { position: absolute; left: 1124px; top: -3px; width: 55px; height: 55px; box-sizing: border-box; border: 2.500px solid #4a6b8f; border-radius: 50%; display: flex; align-items: center; justify-content: center; }
.expand svg { width: 36px; height: 36px; }
.macd-chart { display: block; width: 1200px; height: 188px; margin-top: 7px; overflow: visible; }
.mlab { font-size: 29px; fill: #a3a3a3; font-family: Roboto, sans-serif; }

.dates { display: flex; justify-content: space-between; padding: 6px 14px 0 15px; font-size: 30px; line-height: 26px; color: #a3a3a3; }
.tools { position: relative; width: 201px; margin: 37px 0 0 32px; font-size: 50px; line-height: 56px; font-weight: 700; color: #222; }
.tools-mark { position: absolute; left: 10px; top: 12px; width: 20px; height: 38px; }
.pills { display: flex; gap: 20px; margin-top: 22px; padding-left: 32px; }
.pill { display: flex; align-items: center; justify-content: center; gap: 10px; height: 70px; box-sizing: border-box; border: 2px solid #ccc; border-radius: 12px; font-size: 38px; color: #333; white-space: nowrap; word-spacing: -4px; }
.pill svg { width: 24px; height: 30px; }
.p1 { width: 289px; } .p2 { width: 273px; } .p3 { width: 248px; } .p4 { width: 247px; }
.banner { display: flex; align-items: center; height: 105px; margin-top: 7px; padding: 0 48px 0 38px; border-radius: 16px; background: #f6f6f6; }
.hot { display: flex; align-items: center; justify-content: center; width: 100px; height: 58px; box-sizing: border-box; border: 2px solid #c8504a; border-radius: 5px; color: #c8504a; font-size: 40px; flex: none; }
.banner-text { margin-left: 27px; font-size: 44.500px; color: #666; white-space: nowrap; }
.close { display: flex; align-items: center; justify-content: center; margin-left: auto; width: 45px; height: 45px; border-radius: 50%; background: #ccc; color: #fff; font-size: 42px; line-height: 42px; flex: none; }
.btabs { display: grid; grid-template-columns: 231px 230px 229px 229px 229px; height: 94px; padding-bottom: 8px; align-items: center; font-size: 50px; color: #333; text-align: left; padding-left: 64px; }
.btab.active { font-weight: 700; color: #222; }
.trade { display: flex; align-items: center; height: 141px; padding-left: 38px; }
.index { width: 341px; }
.idx-val { font-size: 43.500px; line-height: 50px; color: #4fa268; }
.idx-line { display: flex; align-items: center; margin-top: 8px; white-space: nowrap; }
.idx-name { font-size: 37px; color: #333; }
.idx-pct { margin-left: 13px; font-size: 42.500px; color: #4fa268; }
.up-chev { width: 30px; height: 18px; margin-right: 32px; flex: none; }
.act-btn { display: flex; align-items: center; justify-content: center; width: 188px; height: 141px; box-sizing: border-box; padding-right: 10px; border-radius: 14px; margin-right: 14px; font-size: 62px; flex: none; }
.buy-btn { background: #f7e2e2; color: #d14a46; }
.sell-btn { background: #e8edf8; color: #6d8ed4; }
.undo-btn { background: #f1f1f1; color: #333; }
.trade-more { display: flex; gap: 13px; margin-left: 24px; }
.trade-more i { width: 13px; height: 13px; border-radius: 50%; background: #222; }
.sysnav { position: absolute; left: 0; right: 0; top: 2523px; height: 129px; background: #fafafa; }
.sys-back { position: absolute; left: 323px; top: 41px; width: 44px; height: 50px; }
.sys-home { position: absolute; left: 575px; top: 41px; width: 50px; height: 50px; }
.sys-rect { position: absolute; left: 833px; top: 42px; width: 44px; height: 46px; }
</style>
